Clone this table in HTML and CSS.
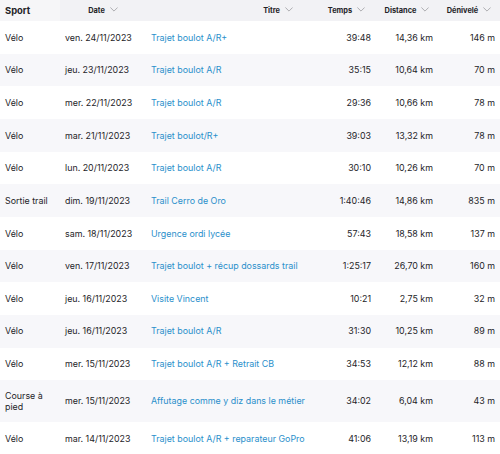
FILE: index.html
```html
<!DOCTYPE html>
<html lang="fr">
<head>
<meta charset="utf-8">
<link rel="stylesheet" href="styles.css">
</head>
<body>
<table class="activities">
  <colgroup>
    <col class="c-sport"><col class="c-date"><col class="c-title"><col class="c-time"><col class="c-dist"><col class="c-elev">
  </colgroup>
  <thead>
    <tr>
      <th class="h-sport">Sport</th>
      <th class="h-sort">Date<svg class="chev" viewBox="0 0 10 6"><path d="M0.5 0.5 L5 5 L9.5 0.5"/></svg></th>
      <th class="h-sort h-title">Titre<svg class="chev" viewBox="0 0 10 6"><path d="M0.5 0.5 L5 5 L9.5 0.5"/></svg></th>
      <th class="h-sort">Temps<svg class="chev" viewBox="0 0 10 6"><path d="M0.5 0.5 L5 5 L9.5 0.5"/></svg></th>
      <th class="h-sort">Distance<svg class="chev" viewBox="0 0 10 6"><path d="M0.5 0.5 L5 5 L9.5 0.5"/></svg></th>
      <th class="h-sort">Dénivelé<svg class="chev" viewBox="0 0 10 6"><path d="M0.5 0.5 L5 5 L9.5 0.5"/></svg></th>
    </tr>
  </thead>
  <tbody>
    <tr><td>Vélo</td><td>ven. 24/11/2023</td><td><a href="#">Trajet boulot A/R+</a></td><td class="num">39:48</td><td class="num">14,36 km</td><td class="num">146 m</td></tr>
    <tr><td>Vélo</td><td>jeu. 23/11/2023</td><td><a href="#">Trajet boulot A/R</a></td><td class="num">35:15</td><td class="num">10,64 km</td><td class="num">70 m</td></tr>
    <tr><td>Vélo</td><td>mer. 22/11/2023</td><td><a href="#">Trajet boulot A/R</a></td><td class="num">29:36</td><td class="num">10,66 km</td><td class="num">78 m</td></tr>
    <tr><td>Vélo</td><td>mar. 21/11/2023</td><td><a href="#">Trajet boulot/R+</a></td><td class="num">39:03</td><td class="num">13,32 km</td><td class="num">78 m</td></tr>
    <tr><td>Vélo</td><td>lun. 20/11/2023</td><td><a href="#">Trajet boulot A/R</a></td><td class="num">30:10</td><td class="num">10,26 km</td><td class="num">70 m</td></tr>
    <tr><td>Sortie trail</td><td>dim. 19/11/2023</td><td><a href="#">Trail Cerro de Oro</a></td><td class="num">1:40:46</td><td class="num">14,86 km</td><td class="num">835 m</td></tr>
    <tr><td>Vélo</td><td>sam. 18/11/2023</td><td><a href="#">Urgence ordi lycée</a></td><td class="num">57:43</td><td class="num">18,58 km</td><td class="num">137 m</td></tr>
    <tr><td>Vélo</td><td>ven. 17/11/2023</td><td><a href="#">Trajet boulot + récup dossards trail</a></td><td class="num">1:25:17</td><td class="num">26,70 km</td><td class="num">160 m</td></tr>
    <tr><td>Vélo</td><td>jeu. 16/11/2023</td><td><a href="#">Visite Vincent</a></td><td class="num">10:21</td><td class="num">2,75 km</td><td class="num">32 m</td></tr>
    <tr><td>Vélo</td><td>jeu. 16/11/2023</td><td><a href="#">Trajet boulot A/R</a></td><td class="num">31:30</td><td class="num">10,25 km</td><td class="num">89 m</td></tr>
    <tr><td>Vélo</td><td>mer. 15/11/2023</td><td><a href="#">Trajet boulot A/R + Retrait CB</a></td><td class="num">34:53</td><td class="num">12,12 km</td><td class="num">88 m</td></tr>
    <tr class="tall"><td>Course à pied</td><td>mer. 15/11/2023</td><td><a href="#">Affutage comme y diz dans le métier</a></td><td class="num">34:02</td><td class="num">6,04 km</td><td class="num">43 m</td></tr>
    <tr><td>Vélo</td><td>mar. 14/11/2023</td><td><a href="#">Trajet boulot A/R + reparateur GoPro</a></td><td class="num">41:06</td><td class="num">13,19 km</td><td class="num">113 m</td></tr>
  </tbody>
</table>
</body>
</html>
```
FILE: styles.css
```css
html, body {
  margin: 0;
  padding: 0;
  background: #ffffff;
}
body {
  font-family: Inter, "Liberation Sans", Arial, sans-serif;
  color: #242428;
  font-size: 8.9px;
}
.activities {
  width: 500px;
  border-collapse: collapse;
  table-layout: fixed;
}
.c-sport { width: 60px; }
.c-date { width: 86px; }
.c-title { width: 171px; }
.c-time { width: 59px; }
.c-dist { width: 62px; }
.c-elev { width: 62px; }

thead tr {
  background: #f2f2f5;
}
th {
  height: 21px;
  padding: 0 5px;
  font-size: 7.4px;
  font-weight: 700;
  text-align: center;
  white-space: nowrap;
  color: #242428;
}
th.h-sport {
  text-align: left;
  font-size: 9.4px;
  background: #f6f6f8;
}
th.h-title {
  text-align: right;
  padding-right: 24px;
}
.chev {
  width: 8px;
  height: 5px;
  margin-left: 5px;
  vertical-align: 1px;
  fill: none;
  stroke: #9a9aa0;
  stroke-width: 1;
}
td {
  height: 32.67px;
  box-sizing: border-box;
  padding: 9px 5px;
  line-height: 11.5px;
  vertical-align: middle;
  overflow: hidden;
}
tbody tr:nth-child(even) {
  background: #f7f7fa;
}
tr.tall td {
  height: 42px;
}
td.num {
  text-align: right;
  white-space: nowrap;
}
a {
  color: #2a8fcb;
  text-decoration: none;
  white-space: nowrap;
}
```
